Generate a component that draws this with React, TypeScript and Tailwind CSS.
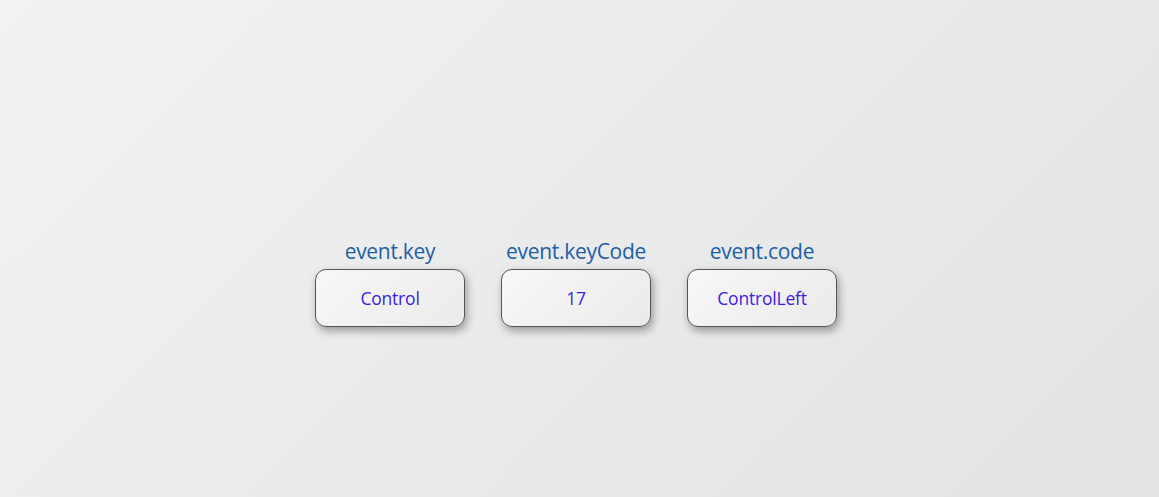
import React from "react";

const items = [
  { label: "event.key", value: "Control" },
  { label: "event.keyCode", value: "17" },
  { label: "event.code", value: "ControlLeft" },
];

export default function App() {
  return (
    <div
      className="w-full h-[497px] bg-[linear-gradient(135deg,#f1f2f3_0%,#e3e3e3_100%)] flex justify-center pt-[237px] pr-[7px]"
      style={{ fontFamily: '"Open Sans", "Noto Sans", sans-serif' }}
    >
      <div className="flex gap-[36px]">
        {items.map((it) => (
          <div key={it.label} className="flex flex-col items-center w-[150px]">
            <div className="text-[21px] leading-[28px] text-[#1d5ea8] mb-[4px] tracking-[-0.3px] whitespace-nowrap">
              {it.label}
            </div>
            <div className="w-[150px] h-[58px] rounded-[11px] border border-[#555555] bg-[linear-gradient(135deg,#f8f8f8_0%,#ece9ea_100%)] shadow-[2px_4px_8px_rgba(0,0,0,0.35)] flex items-center justify-center text-[17.5px] text-[#3b1ee0] tracking-[-0.2px]">
              {it.value}
            </div>
          </div>
        ))}
      </div>
    </div>
  );
}
